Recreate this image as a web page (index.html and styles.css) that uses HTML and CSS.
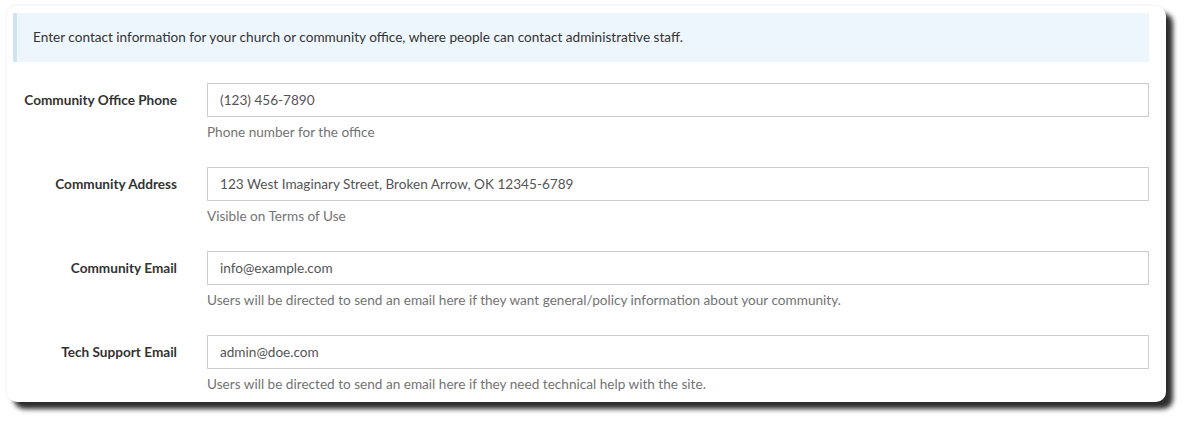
FILE: index.html
```html
<!DOCTYPE html>
<html>
<head>
<meta charset="utf-8">
<link rel="stylesheet" href="styles.css">
</head>
<body>
<div class="card">
  <div class="info">Enter contact information for your church or community office, where people can contact administrative staff.</div>
  <div class="form">
    <div class="row">
      <label class="label">Community Office Phone</label>
      <div class="field">
        <div class="input">(123) 456-7890</div>
        <div class="help">Phone number for the office</div>
      </div>
    </div>
    <div class="row">
      <label class="label">Community Address</label>
      <div class="field">
        <div class="input">123 West Imaginary Street, Broken Arrow, OK 12345-6789</div>
        <div class="help">Visible on Terms of Use</div>
      </div>
    </div>
    <div class="row">
      <label class="label">Community Email</label>
      <div class="field">
        <div class="input">info@example.com</div>
        <div class="help">Users will be directed to send an email here if they want general/policy information about your community.</div>
      </div>
    </div>
    <div class="row">
      <label class="label">Tech Support Email</label>
      <div class="field">
        <div class="input">admin@doe.com</div>
        <div class="help">Users will be directed to send an email here if they need technical help with the site.</div>
      </div>
    </div>
  </div>
</div>
</body>
</html>
```
FILE: styles.css
```css
html, body {
  margin: 0;
  background: #ffffff;
  min-height: 425px;
}
body {
  box-sizing: border-box;
  padding: 6px 0 0 7px;
  font-family: Lato, "Noto Sans", sans-serif;
  font-size: 13.6px;
  color: #333333;
}
.card {
  box-sizing: border-box;
  width: 1159px;
  height: 396px;
  background: #ffffff;
  border-radius: 10px;
  padding: 7px 17px 0 6px;
  box-shadow: 0 0 4px rgba(0, 0, 0, 0.08), 7px 7px 5px #2e2e2e;
}
.info {
  box-sizing: border-box;
  height: 49px;
  background: #eef6fd;
  border-left: 4px solid #d0e3f0;
  padding: 16px 0 0 16px;
  line-height: 17px;
  color: #333333;
}
.form {
  padding-top: 21px;
  display: flex;
  flex-direction: column;
  gap: 26px;
}
.row {
  display: grid;
  grid-template-columns: 194px 1fr;
}
.label {
  text-align: right;
  padding-right: 30px;
  font-weight: bold;
  line-height: 34px;
  color: #333333;
}
.input {
  box-sizing: border-box;
  height: 34px;
  border: 1px solid #cccccc;
  padding: 0 12px;
  line-height: 32px;
  color: #555555;
}
.help {
  margin-top: 7px;
  line-height: 17px;
  color: #737373;
}
```
